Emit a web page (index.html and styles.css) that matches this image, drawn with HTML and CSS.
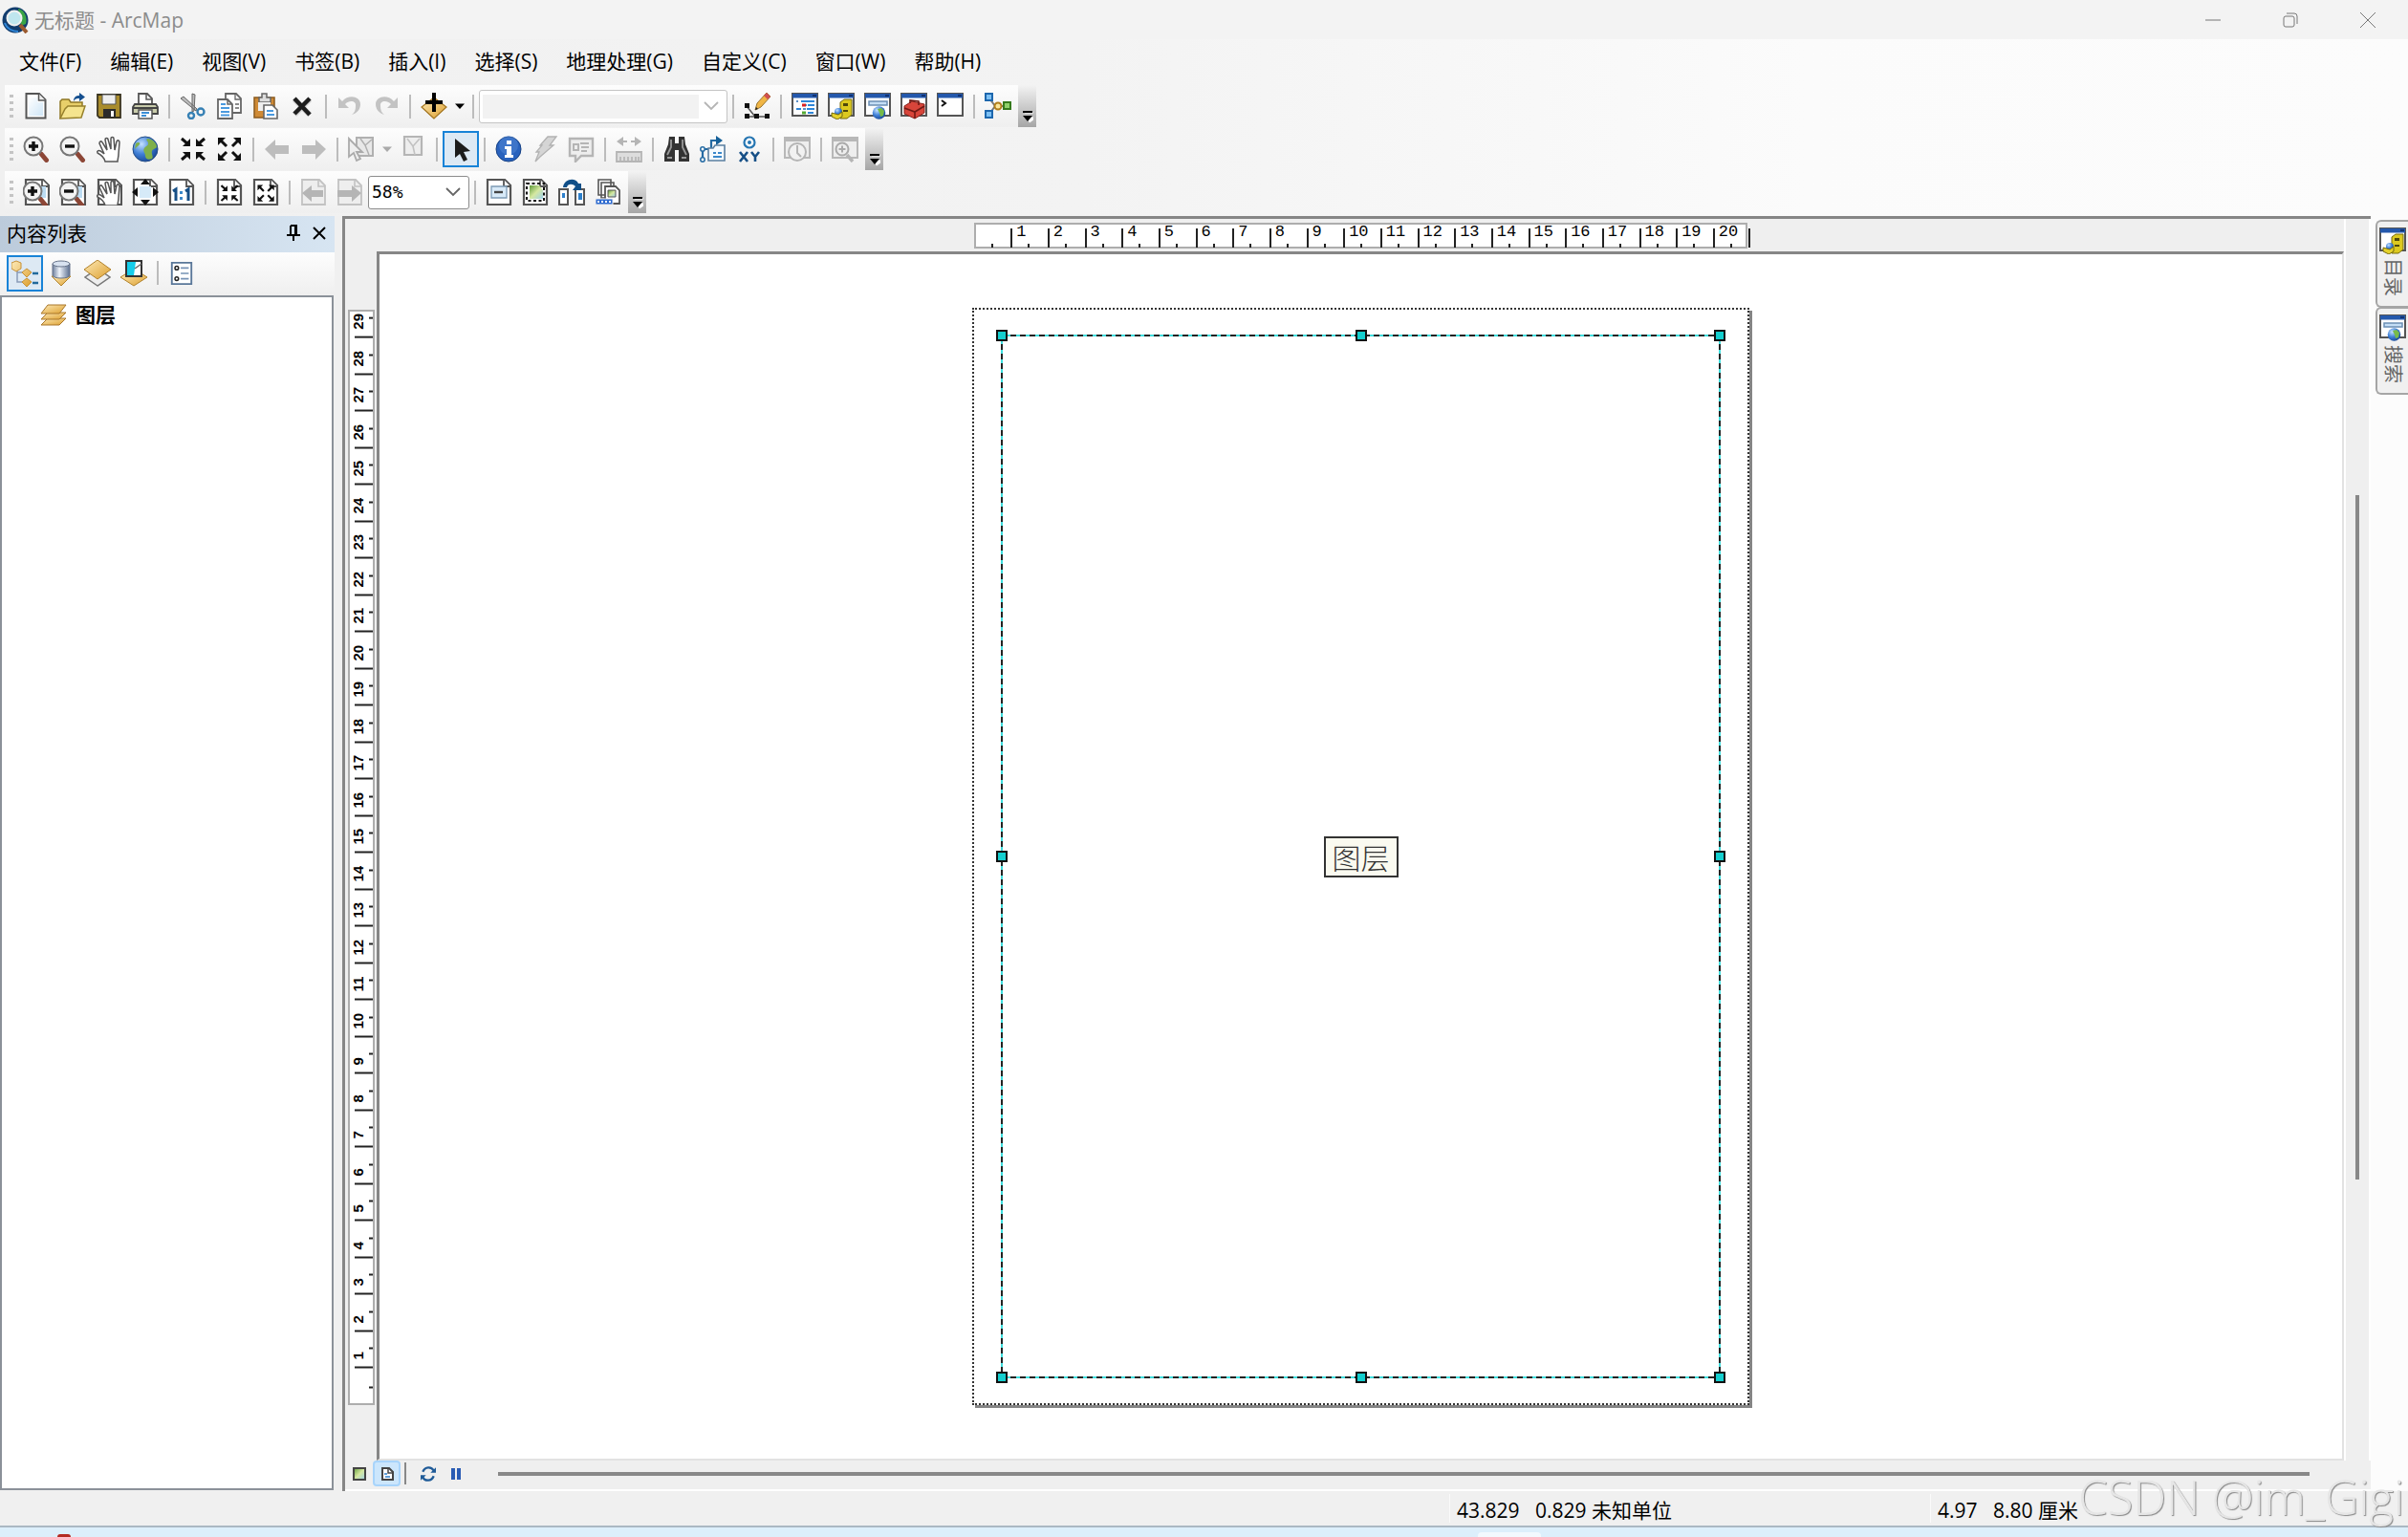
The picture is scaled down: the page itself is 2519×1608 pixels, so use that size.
FILE: index.html
```html
<!DOCTYPE html>
<html lang="zh-CN">
<head>
<meta charset="utf-8">
<title>无标题 - ArcMap</title>
<link rel="stylesheet" href="styles.css">
</head>
<body>
<svg class="defs" aria-hidden="true">
  <defs>
    <linearGradient id="gPage" x1="0" y1="0" x2="1" y2="1"><stop offset="0" stop-color="#fff"/><stop offset="1" stop-color="#cfe6f7"/></linearGradient>
    <linearGradient id="gGold" x1="0" y1="0" x2="1" y2="1"><stop offset="0" stop-color="#fdeab8"/><stop offset="1" stop-color="#dd9f2e"/></linearGradient>
    <radialGradient id="gGlobe" cx=".35" cy=".3" r=".8"><stop offset="0" stop-color="#c4e2ff"/><stop offset=".5" stop-color="#3f7fd6"/><stop offset="1" stop-color="#123f8c"/></radialGradient>
    <linearGradient id="gCyl"><stop offset="0" stop-color="#6e7f9d"/><stop offset=".4" stop-color="#eef3fa"/><stop offset="1" stop-color="#5c6f90"/></linearGradient>
    <linearGradient id="gMap" x1="0" y1="0" x2="1" y2="1"><stop offset="0" stop-color="#5f9a3a"/><stop offset=".5" stop-color="#d5e8a0"/><stop offset="1" stop-color="#9ed0ea"/></linearGradient>
  </defs>
  <symbol id="page" viewBox="0 0 28 28"><path d="M3.500 1H17l6.500 6.500V26.500H3.500z" fill="#fff" stroke="#555" stroke-width="2"/><path d="M6 5h9v5h6v14H6z" fill="url(#gPage)"/><path d="M16.500 1v7h7" fill="#eee" stroke="#555" stroke-width="1.500"/></symbol>
  <symbol id="open" viewBox="0 0 28 28"><path d="M1 27V9l2-2h7l2 3h12v5" fill="#e8cf6a" stroke="#8f7724" stroke-width="1.500"/><path d="M1 27L6 17l3-3h18l-4 12z" fill="#f5e48e" stroke="#96802c" stroke-width="1.500"/><path d="M15 9c0-5 3-6 6-6V0l6 4.500L21 9V6c-3 0-4 0-6 3z" fill="#15508f"/></symbol>
  <symbol id="save" viewBox="0 0 28 28"><path d="M2 2h24v24H4l-2-2z" fill="#a98c2c" stroke="#3a3420" stroke-width="1.800"/><path d="M7 2h14v10H7z" fill="#eee" stroke="#555"/><path d="M8 17h13v9H8z" fill="#2b2b2b"/><path d="M16 19h3v6h-3z" fill="#fff"/></symbol>
  <symbol id="print" viewBox="0 0 28 28"><path d="M7 13V1h9l5 5v7" fill="#fff" stroke="#555" stroke-width="1.800"/><path d="M15 1v6h6" fill="none" stroke="#555" stroke-width="1.500"/><path d="M3 12h22l2 3v7H1v-7z" fill="#c9ccab" stroke="#444" stroke-width="1.800"/><path d="M1 16h26" stroke="#444" stroke-width="2"/><path d="M7 18h14v9H7z" fill="#fff" stroke="#555" stroke-width="1.500"/><path d="M10 21h8M10 24h5" stroke="#3d8fd6" stroke-width="1.800"/></symbol>
  <symbol id="cut" viewBox="0 0 28 28"><path d="M13 1l3 1-1 17-2 1zM1 6l3-2 14 13-1 2z" fill="#bbb" stroke="#666"/><circle cx="12" cy="24" r="3" fill="none" stroke="#3680b4" stroke-width="2.400"/><circle cx="22" cy="20" r="3.500" fill="none" stroke="#3680b4" stroke-width="2.400"/></symbol>
  <symbol id="copy" viewBox="0 0 28 28"><path d="M10 1h11l5 5v15H10z" fill="#fff" stroke="#666" stroke-width="1.800"/><path d="M20 1v6h6M20 12h4M20 16h4" fill="none" stroke="#666" stroke-width="1.300"/><path d="M2 7h10l5 5v15H2z" fill="#fff" stroke="#666" stroke-width="1.800"/><path d="M12 7v5h5" fill="none" stroke="#666" stroke-width="1.500"/><path d="M5 12h5M5 16h9M5 20h9M5 23.500h9" stroke="#4a9adf" stroke-width="2"/></symbol>
  <symbol id="paste" viewBox="0 0 28 28"><path d="M2 5h21v21H2z" fill="#cf8a35" stroke="#8b5a1c" stroke-width="1.500"/><path d="M7 5h3V1h5v4h4v5H7z" fill="#ddd" stroke="#666" stroke-width="1.500"/><path d="M6 10h13v9H6z" fill="#eee"/><path d="M12 13h9l5 5v9H12z" fill="#fff" stroke="#666" stroke-width="1.600"/><path d="M15 19h7M15 23h8" stroke="#4a9adf" stroke-width="2"/></symbol>
  <symbol id="delete" viewBox="0 0 28 28"><path d="M6 7l16 16M22 7L6 23" stroke="#d5d5d5" stroke-width="6"/><path d="M6 6l16 17M22 6L6 22" stroke="#1d1d1d" stroke-width="4.500"/></symbol>
  <symbol id="undo" viewBox="0 0 28 28"><path d="M2 5v11h11l-4-4c5-5 12-3 11 2 0 4-1 7-4 9 6-2 9-6 9-11C25 4 13 1 6 9z" fill="#c3c3c3"/></symbol>
  <symbol id="add" viewBox="0 0 28 28"><path d="M14 27L1 15 14 5l13 10z" fill="url(#gGold)" stroke="#a37520" stroke-width="1.200"/><path d="M14 0v20M5 10h18" stroke="#000" stroke-width="4"/></symbol>
  <symbol id="caret" viewBox="0 0 10 10"><path d="M0 2.500h10L5 8z" fill="currentColor"/></symbol>
  <symbol id="edit" viewBox="0 0 28 28"><path d="M3 14l9 11H3M12 25h12" stroke="#555" stroke-width="1.500" fill="none"/><path d="M1 11h5v5H1zM1 22h5v5H1zM11 22h5v5h-5zM22 22h5v5h-5z" fill="#111"/><path d="M12 18l2-7L24 0l4 4-10 11z" fill="#f0b545" stroke="#98742f"/><path d="M21 3l3-3 4 4-3 3z" fill="#cf5053"/><path d="M12 18l1-3 2 2z" fill="#222"/></symbol>
  <symbol id="win" viewBox="0 0 28 28"><path d="M1 1h26v23H1z" fill="#fff" stroke="#555" stroke-width="2"/><path d="M1 1h26v4.500H1z" fill="#2458ac"/><path d="M22 2h4v2h-4z" fill="#123371"/></symbol>
  <symbol id="toc" viewBox="0 0 28 28"><use href="#win"/><path d="M5 9h2M12 13h4M12 17h3M5 17h2" stroke="#5b8fc9" stroke-width="2"/><path d="M10 9h14M17 13h7M5 17h5M16 17h8M17 21h6" stroke="#2f86d8" stroke-width="2"/><path d="M11 13h4" stroke="#d22" stroke-width="3"/><path d="M11 21h4" stroke="#5a3" stroke-width="3"/></symbol>
  <symbol id="catalog" viewBox="0 0 28 28"><use href="#win"/><path d="M13 10l4-3h8v16l-5 4h-7z" fill="#dcc91f" stroke="#746a10"/><path d="M16 11h5v3h-5zM16 18h5v2h-5z" fill="#4f480a"/><circle cx="11" cy="20" r="4" fill="url(#gGlobe)"/><path d="M4 21l7 2 4-3v5l-5 3-6-3z" fill="#e5d22b" stroke="#746a10"/></symbol>
  <symbol id="search" viewBox="0 0 28 28"><use href="#win"/><path d="M5 9h19v4H5z" fill="#c5def5" stroke="#6b8fb4" stroke-width="1.500"/><circle cx="15.500" cy="21" r="6.800" fill="url(#gGlobe)"/><path d="M14 17l4-1 3 3-1 5-3 1-1-4z" fill="#77bb48"/></symbol>
  <symbol id="toolbox" viewBox="0 0 28 28"><use href="#win"/><path d="M4 14l8-5 13 3v9l-10 6-11-5z" fill="#d8453a" stroke="#87211a"/><path d="M4 16l11 4 10-6M15 20v7M10 11V8l9 1v4" stroke="#701a14" stroke-width="1.600" fill="none"/></symbol>
  <symbol id="python" viewBox="0 0 28 28"><use href="#win"/><path d="M5 8l4 3-4 3" stroke="#111" stroke-width="2" fill="none"/></symbol>
  <symbol id="model" viewBox="0 0 28 28"><path d="M5 6l6 8-6 8M14 14h10" stroke="#777" stroke-width="2" fill="none"/><path d="M1 1h7v7H1zM1 19h7v7H1z" fill="#7cc0f4" stroke="#1d67ad" stroke-width="2"/><circle cx="14" cy="14" r="3.500" fill="#fbe69b" stroke="#b07d1a" stroke-width="2"/><path d="M20 10h7v7h-7z" fill="#8fd06a" stroke="#357a1c" stroke-width="2"/></symbol>
  <symbol id="lens" viewBox="0 0 28 28"><path d="M17 17l3 3" stroke="#777" stroke-width="3"/><path d="M19.500 19.500l5 6" stroke="#8c4636" stroke-width="5" stroke-linecap="round"/><circle cx="11" cy="11" r="9.500" fill="#f3f3f3" stroke="#777" stroke-width="2"/></symbol>
  <symbol id="zoomin" viewBox="0 0 28 28"><use href="#lens"/><path d="M6 11h10M11 6v10" stroke="#111" stroke-width="3.400"/></symbol>
  <symbol id="zoomout" viewBox="0 0 28 28"><use href="#lens"/><path d="M6 11h10" stroke="#111" stroke-width="3.400"/></symbol>
  <symbol id="hand" viewBox="0 0 28 28"><path d="M10 27c-1-4-4-7-8-9-1-2 1-3 3-2l4 3L4 8c0-2 2-3 3-1l5 8L10 4c0-2 3-2 3 0l3 10V3c0-2 3-2 3 0l1 12 2-9c1-2 3-1 3 1l-1 12c0 4-1 5-1 8z" fill="#fff" stroke="#555" stroke-width="1.500"/></symbol>
  <symbol id="globe" viewBox="0 0 28 28"><circle cx="14" cy="14" r="13" fill="url(#gGlobe)" stroke="#264f86"/><path d="M16 3c5 0 9 4 10 8 0 3-4 2-5 5s2 6 0 8c-4 2-7 0-7-3s-3-5-1-8 4-2 4-5-3-3-1-5zM4 8c3-2 5-1 4 1s-4 3-5 5z" fill="#7fb04a"/></symbol>
  <symbol id="fixin" viewBox="0 0 28 28"><path d="M2 3l7 6M26 3l-7 6M2 25l7-6M26 25l-7-6" stroke="#111" stroke-width="3"/><path d="M11 3v8H3zM17 3v8h8zM11 25v-8H3zM17 25v-8h8z" fill="#111"/></symbol>
  <symbol id="fixout" viewBox="0 0 28 28"><path d="M4 4l7 7M24 4l-7 7M4 24l7-7M24 24l-7-7" stroke="#111" stroke-width="3"/><path d="M2 10V2h8zM26 10V2h-8zM2 18v8h8zM26 18v8h-8z" fill="#111"/></symbol>
  <symbol id="back" viewBox="0 0 28 28"><path d="M1 14l11-10v6h14v9H12v6z" fill="#bdbdbd"/></symbol>
  <symbol id="selfeat" viewBox="0 0 28 28"><path d="M9 2h17v19H9z" fill="#e8e8e8" stroke="#b0b0b0" stroke-width="2"/><path d="M13 3l5 7 7-6M18 10l4 10" stroke="#b0b0b0" stroke-width="1.500" fill="none"/><path d="M1 3v19l5-4 3 8 4-2-4-7h6z" fill="#eee" stroke="#aaa" stroke-width="1.800"/></symbol>
  <symbol id="clrfeat" viewBox="0 0 28 28"><path d="M5 1h18v19H5z" fill="#eee" stroke="#b5b5b5" stroke-width="2.200"/><path d="M8 3l6 8 7-8M14 11l2 9" stroke="#c2c2c2" stroke-width="1.600" fill="none"/></symbol>
  <symbol id="pointer" viewBox="0 0 28 28"><path d="M8 3v20l5-4 4 8 4-2-4-8 7-1z" fill="#1c1c1c"/></symbol>
  <symbol id="info" viewBox="0 0 28 28"><circle cx="14" cy="14" r="13" fill="#2962bd" stroke="#174184"/><circle cx="14" cy="10" r="10" fill="#5f93dd" opacity=".4"/><path d="M12 5h5v4h-5zM10 11h7v9h2v3h-9v-3h2v-6h-2z" fill="#fff"/></symbol>
  <symbol id="bolt" viewBox="0 0 28 28"><path d="M17 1h9l-7 9h4L9 22l-5 5 4-10H5l6-7H9z" fill="#d5d5d5" stroke="#b2b2b2" stroke-width="1.300"/></symbol>
  <symbol id="popup" viewBox="0 0 28 28"><path d="M2 3h24v18H14l-6 6v-6H2z" fill="#eee" stroke="#b5b5b5" stroke-width="2.400"/><path d="M6 9h5v6H6zM13 8h9M14 12h8M14 16h6" stroke="#b5b5b5" stroke-width="2" fill="none"/></symbol>
  <symbol id="measure" viewBox="0 0 28 28"><path d="M1 6l7-5v4h4v2H8v4zM27 6l-7-5v4h-4v2h4v4z" fill="#b5b5b5"/><path d="M1 17h26v10H1z" fill="#ddd" stroke="#b5b5b5" stroke-width="1.800"/><path d="M5 26v-4M9 26v-4M13 26v-4M17 26v-4M21 26v-4M24 26v-4" stroke="#aaa" stroke-width="1.300"/></symbol>
  <symbol id="binoc" viewBox="0 0 28 28"><path d="M6 1h6v7h4V1h6l1 8 4 10v8H16V15h-4v12H1v-8L5 9z" fill="#333"/><path d="M8 4v8l-4 8M20 4v8l4 8M4 23h5M19 23h5" stroke="#999" stroke-width="1.800" fill="none"/></symbol>
  <symbol id="route" viewBox="0 0 28 28"><path d="M3 25V14h9V5h6" fill="none" stroke="#246aa3" stroke-width="2.200"/><path d="M17 0l7 5-7 5z" fill="#156099"/><path d="M9 13h5l2-3h10v16H9z" fill="#f5faff" stroke="#5a7fa0" stroke-width="1.600"/><path d="M14 18h3M19 18h4M14 22h9" stroke="#3a88ca" stroke-width="1.800"/><circle cx="3" cy="14" r="2.200" fill="#fff" stroke="#246aa3" stroke-width="1.500"/><circle cx="3" cy="25" r="2.200" fill="#fff" stroke="#246aa3" stroke-width="1.500"/></symbol>
  <symbol id="xy" viewBox="0 0 28 28"><circle cx="14" cy="7" r="5.500" fill="#fff" stroke="#2676b2" stroke-width="2.200"/><circle cx="14" cy="7" r="2" fill="#2676b2"/><path d="M4 17l8 10M12 17L4 27M16 17l4 5 4-5M20 22v5" stroke="#164f86" stroke-width="2.600" fill="none"/></symbol>
  <symbol id="winoff" viewBox="0 0 28 28"><path d="M1 2h26v21H1z" fill="#eee" stroke="#b8b8b8" stroke-width="2"/><path d="M1 1h26v5H1z" fill="#b8b8b8"/></symbol>
  <symbol id="time" viewBox="0 0 28 28"><use href="#winoff"/><circle cx="14" cy="17" r="9" fill="#f2f2f2" stroke="#b5b5b5" stroke-width="2"/><path d="M14 10v8l4 4" stroke="#b5b5b5" stroke-width="2" fill="none"/></symbol>
  <symbol id="viewer" viewBox="0 0 28 28"><use href="#winoff"/><circle cx="11" cy="14" r="6.500" fill="#eee" stroke="#aaa" stroke-width="2"/><path d="M7.500 14h7M11 10.500v7" stroke="#aaa" stroke-width="2"/><path d="M16 20l6 7" stroke="#b5b5b5" stroke-width="3.500"/></symbol>
  <symbol id="pg" viewBox="0 0 28 28"><path d="M2 1h18l6 6v20H2z" fill="#fff" stroke="#555" stroke-width="2.200"/><path d="M19 1v7h7" fill="#fff" stroke="#555" stroke-width="1.800"/></symbol>
  <symbol id="pzin" viewBox="0 0 28 28"><g transform="translate(1)"><use href="#pg"/><path d="M16 8h7v12h-7z" fill="#bcdcf3"/></g><g transform="translate(-1 2)"><use href="#zoomin"/></g></symbol>
  <symbol id="pzout" viewBox="0 0 28 28"><g transform="translate(1)"><use href="#pg"/><path d="M16 8h7v12h-7z" fill="#bcdcf3"/></g><g transform="translate(-1 2)"><use href="#zoomout"/></g></symbol>
  <symbol id="phand" viewBox="0 0 28 28"><g transform="translate(1)"><use href="#pg"/></g><g transform="translate(0 1)"><use href="#hand"/></g></symbol>
  <symbol id="pwhole" viewBox="0 0 28 28"><use href="#pg"/><path d="M8 8h12v12H8z" fill="#d6eaf8"/><path d="M14 0l5 6H9zM14 28l5-6H9zM0 14l6-5v10zM28 14l-6-5v10z" fill="#111"/></symbol>
  <symbol id="pone" viewBox="0 0 28 28"><use href="#pg"/><path d="M5 13l3-2v12M18 13l3-2v12" stroke="#164f86" stroke-width="3" fill="none"/><path d="M12 13h3v3h-3zM12 19h3v3h-3z" fill="#3a88ca"/></symbol>
  <symbol id="pfixin" viewBox="0 0 28 28"><use href="#pg"/><g transform="translate(4 5) scale(.72)"><use href="#fixin" width="28" height="28"/></g></symbol>
  <symbol id="pfixout" viewBox="0 0 28 28"><use href="#pg"/><g transform="translate(4 5) scale(.72)"><use href="#fixout" width="28" height="28"/></g></symbol>
  <symbol id="pback" viewBox="0 0 28 28"><path d="M2 1h18l6 6v20H2z" fill="#eee" stroke="#c2c2c2" stroke-width="1.800"/><path d="M19 1v7h7" fill="none" stroke="#c2c2c2" stroke-width="1.600"/><path d="M2 15l10-8v5h12v7H12v5z" fill="#b5b5b5"/></symbol>
  <symbol id="pfwd" viewBox="0 0 28 28"><path d="M2 1h18l6 6v20H2z" fill="#eee" stroke="#c2c2c2" stroke-width="1.800"/><path d="M19 1v7h7" fill="none" stroke="#c2c2c2" stroke-width="1.600"/><path d="M26 15L16 7v5H1v7h15v5z" fill="#b5b5b5"/></symbol>
  <symbol id="draft" viewBox="0 0 28 28"><use href="#pg"/><path d="M6 8h16v12H6z" fill="#d8eaf8" stroke="#7c9ab4" stroke-width="1.300"/><path d="M9 14h9" stroke="#444" stroke-width="2.400"/></symbol>
  <symbol id="focus" viewBox="0 0 28 28"><use href="#pg"/><path d="M8 7h10l4 5v9H8z" fill="url(#gMap)"/><path d="M5 5h18v18H5z" fill="none" stroke="#111" stroke-width="2" stroke-dasharray="3 2.500"/></symbol>
  <symbol id="chlayout" viewBox="0 0 28 28"><path d="M1 11h9v16H1zM18 11h9v16h-9z" fill="#fff" stroke="#555" stroke-width="2"/><path d="M4 15h3v5H4zM21 15h4v7h-4z" fill="#2d80cc"/><path d="M5 9c1-9 13-11 16-4h3v7h-9l3-4c-3-3-8-3-9 1z" fill="#104f88"/></symbol>
  <symbol id="ddp" viewBox="0 0 28 28"><path d="M4 1h13v16H4zM7 4h13v16H7z" fill="#fff" stroke="#555" stroke-width="1.600"/><path d="M11 8h11l4 4v14H11z" fill="#fff" stroke="#555" stroke-width="1.800"/><path d="M14 12h8v7h-8z" fill="url(#gMap)" stroke="#555"/><path d="M1 21h18v6H1z" fill="#2e6bd0" stroke="#eee"/><path d="M3 24h14" stroke="#fff" stroke-width="2" stroke-dasharray="2 2"/></symbol>
  <symbol id="more" viewBox="0 0 12 14"><path d="M3 3h10M5 8h7v2l-4 3z" fill="#fff" stroke="#fff"/><path d="M1 1h10v2H1zM1 6h10l-5 6z" fill="#000"/></symbol>
  <symbol id="bydraw" viewBox="0 0 28 28"><path d="M6 9v14h6M6 13h6" stroke="#8a9cb8" stroke-width="1.500" fill="none"/><path d="M0 3l5-2 5 2v6l-5 3-5-3zM11 13l5-4 5 4-5 5zM11 23l5-4 5 4-5 5z" fill="url(#gGold)" stroke="#c79239"/><path d="M22 14h6M22 24h6" stroke="#226a9c" stroke-width="2.500"/></symbol>
  <symbol id="bysrc" viewBox="0 0 28 28"><path d="M4 17h20L14 27z" fill="url(#gGold)" stroke="#b1822c"/><path d="M5 4v12c0 4 18 4 18 0V4z" fill="url(#gCyl)" stroke="#66738a"/><ellipse cx="14" cy="4" rx="9" ry="3" fill="#d8e2f0" stroke="#66738a"/></symbol>
  <symbol id="byvis" viewBox="0 0 28 28"><path d="M14 27L1 18l13-9 13 9z" fill="#eee" stroke="#777" stroke-width="1.500"/><path d="M14 20L0 10 14 0l14 10z" fill="url(#gGold)" stroke="#b1822c"/></symbol>
  <symbol id="bysel" viewBox="0 0 28 28"><path d="M14 27L0 18l8-5h12l8 5z" fill="url(#gGold)" stroke="#b1822c"/><path d="M6 1h16v16H6z" fill="#fff" stroke="#333" stroke-width="2"/><path d="M7 2h9l-2 14H7z" fill="#16cdea"/><path d="M22 4l-7 5" stroke="#666" stroke-width="1.500"/></symbol>
  <symbol id="opts" viewBox="0 0 28 28"><path d="M3 2h22v24H3z" fill="#fff" stroke="#5a7799" stroke-width="2"/><circle cx="8.500" cy="8" r="2" fill="none" stroke="#222" stroke-width="1.600"/><circle cx="8.500" cy="20" r="2" fill="none" stroke="#222" stroke-width="1.600"/><path d="M13 8h9M13 14h9M13 20h9" stroke="#7692b5" stroke-width="1.800"/></symbol>
  <symbol id="layers" viewBox="0 0 28 28"><g fill="url(#gGold)" stroke="#a9772b"><path d="M1 25l7-7h19l-7 7z"/><path d="M1 19l7-7h19l-7 7z"/><path d="M1 13l7-9h19l-7 9z"/></g></symbol>
  <symbol id="arcmap" viewBox="0 0 28 28"><circle cx="14" cy="14" r="13.500" fill="#123d6e"/><path d="M17 2c7 2 10 9 8 16l-5 2z" fill="#3aa545"/><path d="M3 17c2 6 8 9 14 9" stroke="#2f86d8" stroke-width="2" fill="none"/><path d="M19 19l7 8" stroke="#9b5a2f" stroke-width="4"/><circle cx="13" cy="12" r="7.500" fill="#bfe6ee" stroke="#f0f0f0" stroke-width="2"/></symbol>
  <symbol id="chev" viewBox="0 0 16 10"><path d="M1 1l7 7 7-7" fill="none" stroke="currentColor" stroke-width="1.800"/></symbol>
</svg>

<header class="titlebar">
  <svg class="app-icon"><use href="#arcmap"/></svg>
  <h1>无标题 - ArcMap</h1>
  <div class="window-buttons">
    <button aria-label="最小化"><svg viewBox="0 0 16 16"><path d="M0 8h16"/></svg></button>
    <button aria-label="还原"><svg viewBox="0 0 16 16"><rect x="1" y="4" width="11" height="11" rx="2"/><path d="M4 1h8q3 0 3 3v8"/></svg></button>
    <button aria-label="关闭"><svg viewBox="0 0 16 16"><path d="M0 0l16 16M16 0L0 16"/></svg></button>
  </div>
</header>

<div class="command-area">
  <nav class="menubar">
    <button>文件(F)</button><button>编辑(E)</button><button>视图(V)</button><button>书签(B)</button><button>插入(I)</button><button>选择(S)</button><button>地理处理(G)</button><button>自定义(C)</button><button>窗口(W)</button><button>帮助(H)</button>
  </nav>
  <div class="toolbar" role="toolbar" aria-label="标准工具">
    <span class="grip"></span>
    <button class="tool" aria-label="新建"><svg><use href="#page"/></svg></button>
    <button class="tool" aria-label="打开"><svg><use href="#open"/></svg></button>
    <button class="tool" aria-label="保存"><svg><use href="#save"/></svg></button>
    <button class="tool" aria-label="打印"><svg><use href="#print"/></svg></button>
    <span class="sep"></span>
    <button class="tool" aria-label="剪切"><svg><use href="#cut"/></svg></button>
    <button class="tool" aria-label="复制"><svg><use href="#copy"/></svg></button>
    <button class="tool" aria-label="粘贴"><svg><use href="#paste"/></svg></button>
    <button class="tool" aria-label="删除"><svg><use href="#delete"/></svg></button>
    <span class="sep"></span>
    <button class="tool" aria-label="撤消"><svg><use href="#undo"/></svg></button>
    <button class="tool" aria-label="恢复"><svg class="flip"><use href="#undo"/></svg></button>
    <span class="sep"></span>
    <button class="tool" aria-label="添加数据"><svg><use href="#add"/></svg></button>
    <button class="drop" aria-label="添加数据选项"><svg><use href="#caret"/></svg></button>
    <span class="sep"></span>
    <span class="combo combo-scale"><select aria-label="地图比例" disabled></select><svg><use href="#chev"/></svg></span>
    <span class="sep"></span>
    <button class="tool" aria-label="编辑器工具条"><svg><use href="#edit"/></svg></button>
    <span class="sep"></span>
    <button class="tool" aria-label="内容列表"><svg><use href="#toc"/></svg></button>
    <button class="tool" aria-label="目录"><svg><use href="#catalog"/></svg></button>
    <button class="tool" aria-label="搜索"><svg><use href="#search"/></svg></button>
    <button class="tool" aria-label="工具箱"><svg><use href="#toolbox"/></svg></button>
    <button class="tool" aria-label="Python"><svg><use href="#python"/></svg></button>
    <span class="sep"></span>
    <button class="tool" aria-label="模型构建器"><svg><use href="#model"/></svg></button>
    <button class="overflow" aria-label="更多"><svg><use href="#more"/></svg></button>
  </div>
  <div class="toolbar" role="toolbar" aria-label="工具">
    <span class="grip"></span>
    <button class="tool" aria-label="放大"><svg><use href="#zoomin"/></svg></button>
    <button class="tool" aria-label="缩小"><svg><use href="#zoomout"/></svg></button>
    <button class="tool" aria-label="平移"><svg><use href="#hand"/></svg></button>
    <button class="tool" aria-label="全图"><svg><use href="#globe"/></svg></button>
    <span class="sep"></span>
    <button class="tool" aria-label="固定比例放大"><svg><use href="#fixin"/></svg></button>
    <button class="tool" aria-label="固定比例缩小"><svg><use href="#fixout"/></svg></button>
    <span class="sep"></span>
    <button class="tool" aria-label="返回"><svg><use href="#back"/></svg></button>
    <button class="tool" aria-label="前进"><svg class="flip"><use href="#back"/></svg></button>
    <span class="sep"></span>
    <button class="tool" aria-label="选择要素"><svg><use href="#selfeat"/></svg></button>
    <button class="drop off" aria-label="选择要素选项"><svg><use href="#caret"/></svg></button>
    <button class="tool" aria-label="清除所选要素"><svg><use href="#clrfeat"/></svg></button>
    <span class="sep"></span>
    <button class="tool active" aria-label="选择元素"><svg><use href="#pointer"/></svg></button>
    <span class="sep"></span>
    <button class="tool" aria-label="识别"><svg><use href="#info"/></svg></button>
    <button class="tool" aria-label="超链接"><svg><use href="#bolt"/></svg></button>
    <button class="tool" aria-label="HTML 弹出窗口"><svg><use href="#popup"/></svg></button>
    <span class="sep"></span>
    <button class="tool" aria-label="测量"><svg><use href="#measure"/></svg></button>
    <span class="sep"></span>
    <button class="tool" aria-label="查找"><svg><use href="#binoc"/></svg></button>
    <button class="tool" aria-label="查找路径"><svg><use href="#route"/></svg></button>
    <button class="tool" aria-label="转到 XY"><svg><use href="#xy"/></svg></button>
    <span class="sep"></span>
    <button class="tool" aria-label="时间滑块"><svg><use href="#time"/></svg></button>
    <span class="sep"></span>
    <button class="tool" aria-label="查看器窗口"><svg><use href="#viewer"/></svg></button>
    <button class="overflow" aria-label="更多"><svg><use href="#more"/></svg></button>
  </div>
  <div class="toolbar" role="toolbar" aria-label="布局">
    <span class="grip"></span>
    <button class="tool" aria-label="放大布局"><svg><use href="#pzin"/></svg></button>
    <button class="tool" aria-label="缩小布局"><svg><use href="#pzout"/></svg></button>
    <button class="tool" aria-label="平移布局"><svg><use href="#phand"/></svg></button>
    <button class="tool" aria-label="缩放整个页面"><svg><use href="#pwhole"/></svg></button>
    <button class="tool" aria-label="缩放至 100%"><svg><use href="#pone"/></svg></button>
    <span class="sep"></span>
    <button class="tool" aria-label="固定比例放大布局"><svg><use href="#pfixin"/></svg></button>
    <button class="tool" aria-label="固定比例缩小布局"><svg><use href="#pfixout"/></svg></button>
    <span class="sep"></span>
    <button class="tool" aria-label="返回到范围"><svg><use href="#pback"/></svg></button>
    <button class="tool" aria-label="前进至范围"><svg><use href="#pfwd"/></svg></button>
    <span class="combo combo-zoom"><select aria-label="缩放百分比"><option>58%</option></select><svg><use href="#chev"/></svg></span>
    <span class="sep"></span>
    <button class="tool" aria-label="切换描绘模式"><svg><use href="#draft"/></svg></button>
    <button class="tool" aria-label="焦点数据框"><svg><use href="#focus"/></svg></button>
    <button class="tool" aria-label="更改布局"><svg><use href="#chlayout"/></svg></button>
    <button class="tool" aria-label="数据驱动页面"><svg><use href="#ddp"/></svg></button>
    <button class="overflow" aria-label="更多"><svg><use href="#more"/></svg></button>
  </div>
</div>

<main class="workspace">
  <aside class="toc">
    <div class="toc-head">
      <h2>内容列表</h2>
      <button aria-label="自动隐藏"><svg viewBox="0 0 14 18"><path d="M4 1h6v9M4 1v9M9 1v9M0 11h14M7 11v6"/></svg></button>
      <button aria-label="关闭"><svg viewBox="0 0 14 18"><path d="M1 3l12 12M13 3L1 15"/></svg></button>
    </div>
    <div class="toc-tools">
      <button class="tool active" aria-label="按绘制顺序列出"><svg><use href="#bydraw"/></svg></button>
      <button class="tool" aria-label="按源列出"><svg><use href="#bysrc"/></svg></button>
      <button class="tool" aria-label="按可见性列出"><svg><use href="#byvis"/></svg></button>
      <button class="tool" aria-label="按选择列出"><svg><use href="#bysel"/></svg></button>
      <span class="sep"></span>
      <button class="tool" aria-label="选项"><svg class="small"><use href="#opts"/></svg></button>
    </div>
    <ul class="tree">
      <li><svg><use href="#layers"/></svg>图层</li>
    </ul>
  </aside>

  <section class="view">
    <div class="ruler-top">
      <div class="ruler-h">
        <div class="ticks-h"><span></span><span>1</span><span>2</span><span>3</span><span>4</span><span>5</span><span>6</span><span>7</span><span>8</span><span>9</span><span>10</span><span>11</span><span>12</span><span>13</span><span>14</span><span>15</span><span>16</span><span>17</span><span>18</span><span>19</span><span>20</span></div>
      </div>
    </div>
    <div class="ruler-left">
      <div class="ruler-v"><span>29</span><span>28</span><span>27</span><span>26</span><span>25</span><span>24</span><span>23</span><span>22</span><span>21</span><span>20</span><span>19</span><span>18</span><span>17</span><span>16</span><span>15</span><span>14</span><span>13</span><span>12</span><span>11</span><span>10</span><span>9</span><span>8</span><span>7</span><span>6</span><span>5</span><span>4</span><span>3</span><span>2</span><span>1</span><span></span></div>
    </div>
    <div class="canvas">
      <div class="sheet">
        <div class="frame">
          <span class="frame-name">图层</span>
          <i class="h nw"></i><i class="h n"></i><i class="h ne"></i><i class="h w"></i><i class="h e"></i><i class="h sw"></i><i class="h s"></i><i class="h se"></i>
        </div>
      </div>
    </div>
    <div class="vscroll"><span></span></div>
    <div class="viewbar">
      <button aria-label="数据视图"><svg viewBox="0 0 14 14"><path d="M1 1h12v12H1z" fill="url(#gMap)" stroke="#444" stroke-width="2"/></svg></button>
      <button class="on" aria-label="布局视图"><svg viewBox="0 0 14 14"><path d="M2 1h7l4 4v8H2z" fill="#fff" stroke="#444" stroke-width="2"/><path d="M8 1v5h5" fill="none" stroke="#444" stroke-width="1.500"/><path d="M4 7h3M5 10h5" stroke="#2d80cc" stroke-width="1.600"/></svg></button>
      <span class="bar"></span>
      <button class="refresh" aria-label="刷新"><svg viewBox="0 0 14 14"><path d="M2 5c2-5 8-5 10-1M12 9c-2 5-8 5-10 1" fill="none" stroke="#1f5b98" stroke-width="2"/><path d="M14 1v5H9zM0 13V8h5z" fill="#1f5b98"/></svg></button>
      <button aria-label="暂停绘制"><svg viewBox="0 0 14 14"><path d="M4 1v12M10 1v12" stroke="#2a5cb4" stroke-width="4"/></svg></button>
      <div class="hscroll"></div>
    </div>
  </section>

  <div class="dock">
    <button><svg><use href="#catalog"/></svg><span>目录</span></button>
    <button><svg><use href="#search"/></svg><span>搜索</span></button>
  </div>
</main>

<footer class="statusbar">
  <span class="pane grow"></span>
  <span class="pane coords">43.829&nbsp;&nbsp; 0.829 未知单位</span>
  <span class="pane position">4.97&nbsp;&nbsp; 8.80 厘米</span>
  <span class="watermark">CSDN @im_Gigi</span>
</footer>
<div class="taskbar"><span class="dot"></span><span class="peek"></span></div>
</body>
</html>
```
FILE: styles.css
```css
* { box-sizing: border-box; }
body {
  margin: 0;
  height: 100vh;
  display: flex;
  flex-direction: column;
  overflow: hidden;
  background: #f0f0f0;
  color: #000;
  font: 21px/28px "Open Sans", "Noto Sans CJK SC", sans-serif;
}
button { margin: 0; padding: 0; border: 0; background: none; color: inherit; font: inherit; }
h1, h2, ul { margin: 0; padding: 0; font: inherit; list-style: none; }
svg { display: block; flex: none; }
.defs { position: absolute; width: 0; height: 0; }
.flip { transform: scaleX(-1); }

.titlebar { flex: none; display: flex; align-items: center; height: 41px; padding: 0 2px; background: #f3f3f3; color: #8c8c8c; }
.titlebar h1 { padding-left: 6px; }
.app-icon { width: 28px; height: 28px; }
.window-buttons { display: flex; margin-left: auto; }
.window-buttons button { width: 81px; height: 38px; display: grid; place-items: center; }
.window-buttons svg { width: 16px; height: 16px; overflow: visible; fill: none; stroke: #777; stroke-width: 1; }

.command-area { flex: none; padding-bottom: 2px; background: linear-gradient(90deg, #f0f0f0, #f3f3f3 45%, #fbfbfb 75%, #fcfcfc); }
.menubar { display: flex; gap: 30px; height: 48px; padding: 0 0 2px 20px; align-items: center; }

.toolbar { display: flex; align-items: center; width: max-content; height: 44px; margin: 0 0 1px 5px; background: linear-gradient(#fdfdfd, #efefef); }
.grip { width: 4px; height: 25px; margin: 0 5px; background: repeating-linear-gradient(#c4c4c4 0 3px, transparent 3px 7px); }
.tool { width: 38px; height: 38px; display: grid; place-items: center; }
.tool svg { width: 28px; height: 28px; }
.tool svg.small { width: 26px; height: 26px; }
.tool.active { border: 2px solid #1883d7; background: #dde9f4; }
.sep { width: 2px; height: 25px; margin: 0 5px; background: #bcbcbc; }
.drop { width: 16px; height: 38px; display: grid; place-items: center; }
.drop svg { width: 10px; height: 10px; }
.drop.off { color: #aaa; }
.overflow { width: 19px; height: 44px; margin-left: 2px; padding-bottom: 4px; display: flex; align-items: flex-end; justify-content: center; background: linear-gradient(#f3f3f3, #a6a6a6); }
.overflow svg { width: 12px; height: 14px; }

.combo { display: grid; grid-template-columns: 1fr 32px; align-items: center; height: 35px; border: 1px solid #8c8c8c; border-radius: 3px; background: #fff; color: #666; }
.combo select { grid-area: 1 / 1 / 2 / 3; width: 100%; height: 33px; padding: 0 3px; border: 0; background: none; appearance: none; color: #000; font: 18px/24px "DejaVu Sans Mono", monospace; }
.combo svg { grid-area: 1 / 2; justify-self: center; width: 16px; height: 10px; pointer-events: none; }
.combo-scale { width: 260px; border-color: #c4c4c4; color: #b5b5b5; }
.combo-scale select { grid-area: 1 / 1; height: 25px; margin-left: 3px; background: #ededed; }
.combo-zoom { width: 106px; }

.workspace { flex: 1; min-height: 0; display: grid; grid-template-columns: 358px minmax(0, 1fr) 39px; }
.toc { display: flex; flex-direction: column; min-height: 0; padding: 0 8px 1px 0; }
.toc-head { display: flex; align-items: center; height: 38px; padding: 0 3px 2px 7px; background: linear-gradient(90deg, #bccbdb, #d7e5f2); }
.toc-head h2 { margin-right: auto; }
.toc-head button { width: 27px; display: grid; place-items: center; }
.toc-head svg { width: 14px; height: 18px; fill: none; stroke: #000; stroke-width: 2; }
.toc-tools { display: flex; align-items: center; height: 45px; padding: 0 0 2px 7px; background: linear-gradient(#fdfdfd, #efefef); }
.tree { flex: 1; width: 349px; border: 2px solid #8b9199; background: #fff; }
.tree li { display: flex; align-items: center; gap: 9px; padding: 4px 0 0 40px; font-weight: 700; }
.tree svg { width: 28px; height: 28px; }

.view {
  display: grid;
  grid-template: 34px minmax(0, 1fr) 32px / 33px minmax(0, 1fr) 28px;
  min-height: 0;
  border: solid #868686;
  border-width: 3px 0 0 3px;
  background: #efefef;
}
.ruler-top { grid-area: 1 / 2; display: flex; justify-content: center; padding: 4px 0 3px 3px; }
.ruler-h { width: 812px; height: 27px; padding-right: 3px; background: linear-gradient(#fff, #fff) 2px 2px / 805px 23px no-repeat, linear-gradient(#adadad, #adadad) 0 0 / 809px 27px no-repeat; }
.ticks-h { display: grid; grid-template-columns: repeat(21, 1fr); height: 26px; margin-right: -3px; background: linear-gradient(#222, #222) right bottom / 2px 20px no-repeat; }
.ticks-h span { padding-left: 6px; font: 17px/20px "Liberation Mono", monospace; background: linear-gradient(#222, #222) left bottom / 2px 20px no-repeat, linear-gradient(#222, #222) 50% 100% / 2px 4px no-repeat; }
.ticks-h span:first-child { background: linear-gradient(#222, #222) 50% 100% / 2px 4px no-repeat; }
.ruler-left { grid-area: 2 / 1; display: flex; align-items: center; padding: 3px 0 0 3px; }
.ruler-v { display: flex; flex-direction: column; width: 28px; height: 1146px; padding: 0 2px; background: #fff; box-shadow: inset 0 0 0 2px #adadad; }
.ruler-v span {
  flex: 10 1 0;
  min-height: 0;
  display: flex;
  writing-mode: vertical-rl;
  transform: rotate(180deg);
  padding-top: 9px;
  font: 700 15px/18px "Liberation Sans", sans-serif;
  background: linear-gradient(#222, #222) left top / 19px 2px no-repeat, linear-gradient(#222, #222) 0 20px / 4px 2px no-repeat;
}
.ruler-v span:first-child { flex-grow: 7; }
.ruler-v span:last-child { background: linear-gradient(#222, #222) 0 18px / 4px 2px no-repeat; }
.canvas { grid-area: 2 / 2; display: grid; place-items: center; border: solid #868686; border-width: 3px 2px 2px 3px; border-right-color: #e2e2e2; border-bottom-color: #e2e2e2; background: #fff; }
.sheet { width: 813px; height: 1148px; padding: 26px 28px; border: 2px dotted #333; box-shadow: 3px 3px #858585; }
.frame {
  position: relative;
  height: 100%;
  display: grid;
  place-items: center;
  background:
    repeating-linear-gradient(90deg, #222 0 6px, #40dede 6px 10px) top / 100% 2px no-repeat,
    repeating-linear-gradient(90deg, #222 0 6px, #40dede 6px 10px) bottom / 100% 2px no-repeat,
    repeating-linear-gradient(#222 0 6px, #40dede 6px 10px) left / 2px 100% no-repeat,
    repeating-linear-gradient(#222 0 6px, #40dede 6px 10px) right / 2px 100% no-repeat;
}
.frame-name { padding: 0 7px; border: 2px solid #333; background: #fafaf0; color: #333; font: 300 30px/39px "Noto Sans CJK SC", sans-serif; }
.h { position: absolute; width: 12px; height: 12px; border: 2px solid #111; background: #14cfcf; }
.nw, .n, .ne { top: -5px; }
.sw, .s, .se { bottom: -5px; }
.w, .e { top: calc(50% - 6px); }
.n, .s { left: calc(50% - 6px); }
.nw, .w, .sw { left: -5px; }
.ne, .e, .se { right: -5px; }

.vscroll { grid-area: 1 / 3 / 3 / 4; display: grid; grid-template-rows: 290fr 717fr 295fr; justify-items: center; border: solid #fff; border-width: 0 2px; }
.vscroll span { grid-row: 2; width: 4px; background: #888; }
.viewbar { grid-area: 3 / 1 / 4 / 4; display: flex; align-items: center; padding-bottom: 3px; border-bottom: 2px solid #fff; }
.viewbar button { width: 29px; height: 27px; display: grid; place-items: center; }
.viewbar svg { width: 14px; height: 14px; }
.viewbar .on { border: 2px solid #a8d4fb; border-radius: 4px; background: #cce6fc; }
.viewbar .bar { width: 2px; height: 23px; margin: 0 8px 0 4px; background: #888; }
.viewbar .refresh svg { width: 16px; height: 16px; }
.hscroll { flex: 1; height: 4px; margin: 0 64px 0 30px; background: #888; }

.dock { display: flex; flex-direction: column; padding-top: 4px; background: #fcfcfc; }
.dock button { display: flex; flex-direction: column; align-items: center; gap: 4px; width: 34px; height: 92px; margin: 0 0 -1px auto; padding-top: 6px; border: solid #a5a5a5; border-width: 2px 0 2px 2px; border-radius: 6px 0 0 6px; background: #f0f0f0; color: #666; }
.dock svg { width: 28px; height: 28px; }
.dock span { writing-mode: vertical-rl; text-orientation: sideways; font-size: 20px; line-height: 28px; }

.statusbar { flex: none; position: relative; display: flex; height: 38px; padding: 3px 0; border-bottom: 2px solid #abb8c3; }
.pane { padding: 3px 0 0 7px; border-left: 1px solid #fafafa; }
.grow { flex: 1; border: 0; }
.coords { width: 503px; }
.position { width: 500px; }
.watermark { position: absolute; right: 4px; bottom: 0; font-size: 49px; line-height: 60px; color: #e6e6e6; font-weight: 300; text-shadow: 1px 1px 1px #888; }
.taskbar { flex: none; display: flex; align-items: flex-end; height: 10px; background: #dceffb; overflow: hidden; }
.dot { width: 14px; height: 3px; margin-left: 60px; border-radius: 7px 7px 0 0; background: #b32b22; }
.peek { width: 66px; height: 5px; margin-left: auto; margin-right: 36%; border-radius: 4px 4px 0 0; background: #f2f9fe; }
```
